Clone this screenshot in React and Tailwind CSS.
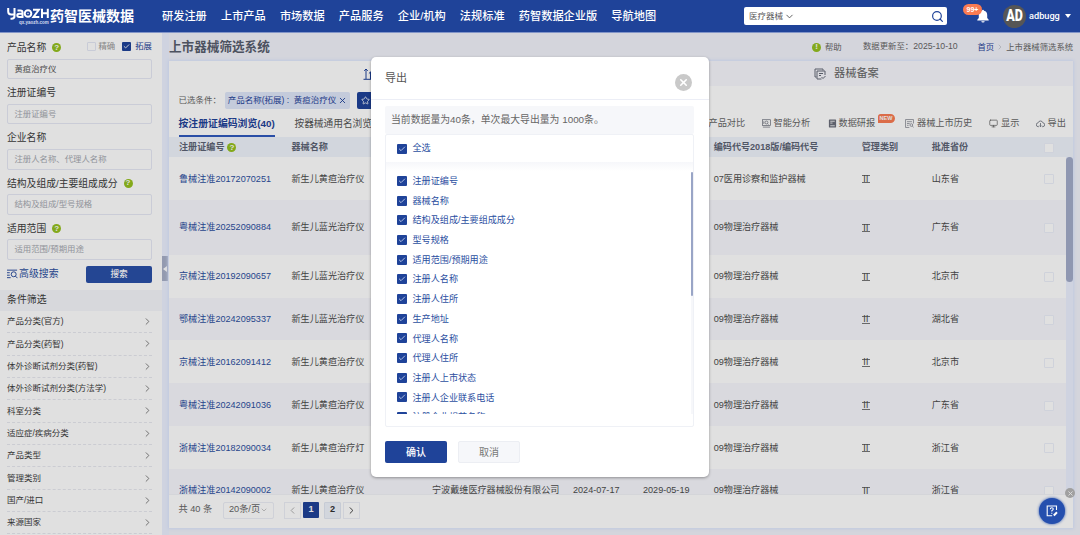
import React from "react";
import {
  Check,
  ChevronDown,
  ChevronLeft,
  ChevronRight,
  Monitor,
  Search,
  Star,
  X,
} from "lucide-react";

const navItems = ["研发注册", "上市产品", "市场数据", "产品服务", "企业/机构", "法规标准", "药智数据企业版", "导航地图"];

const fields = [
  { label: "产品名称", value: "黄疸治疗仪", help: true, modes: true },
  { label: "注册证编号", placeholder: "注册证编号" },
  { label: "企业名称", placeholder: "注册人名称、代理人名称" },
  { label: "结构及组成/主要组成成分", placeholder: "结构及组成/型号规格", help: true },
  { label: "适用范围", placeholder: "适用范围/预期用途", help: true },
];

const filters = [
  "产品分类(官方)",
  "产品分类(药智)",
  "体外诊断试剂分类(药智)",
  "体外诊断试剂分类(方法学)",
  "科室分类",
  "适应症/疾病分类",
  "产品类型",
  "管理类别",
  "国产/进口",
  "来源国家",
];

const rows = [
  { no: "鲁械注准20172070251", name: "新生儿黄疸治疗仪", code: "07医用诊察和监护器械", area: "山东省" },
  { no: "粤械注准20252090884", name: "新生儿蓝光治疗仪", code: "09物理治疗器械", area: "广东省", tall: true },
  { no: "京械注准20192090657", name: "新生儿蓝光治疗仪", code: "09物理治疗器械", area: "北京市" },
  { no: "鄂械注准20242095337", name: "新生儿蓝光治疗仪", code: "09物理治疗器械", area: "湖北省" },
  { no: "京械注准20162091412", name: "新生儿黄疸治疗仪", code: "09物理治疗器械", area: "北京市" },
  { no: "粤械注准20242091036", name: "新生儿黄疸治疗仪", code: "09物理治疗器械", area: "广东省" },
  { no: "浙械注准20182090034", name: "新生儿黄疸治疗灯", code: "09物理治疗器械", area: "浙江省" },
  {
    no: "浙械注准20142090002",
    name: "新生儿黄疸治疗仪",
    company: "宁波戴维医疗器械股份有限公司",
    from: "2024-07-17",
    to: "2029-05-19",
    code: "09物理治疗器械",
    area: "浙江省",
  },
];

const exportFields = [
  "注册证编号",
  "器械名称",
  "结构及组成/主要组成成分",
  "型号规格",
  "适用范围/预期用途",
  "注册人名称",
  "注册人住所",
  "生产地址",
  "代理人名称",
  "代理人住所",
  "注册人上市状态",
  "注册人企业联系电话",
  "注册企业规范名称",
];

const columns = "grid grid-cols-[112.5px_140.5px_141px_70px_70.7px_148px_70px_112.4px_1fr] items-center pl-2.5 pt-[2px]";

const HelpDot = ({ mark = "?" }) => (
  <span className="inline-flex size-[9px] shrink-0 items-center justify-center rounded-full bg-[#96c11f] text-[8px] leading-none font-bold text-white">
    {mark}
  </span>
);

const Tick = () => (
  <span className="flex size-2.5 shrink-0 items-center justify-center rounded-[1px] bg-[#1f4399]">
    <Check className="size-2 text-[#c9d4ee]" strokeWidth={2.5} />
  </span>
);

const EmptyBox = () => <span className="block size-2.5 rounded-[1px] border border-[#eceffa] bg-white" />;

// small toolbar glyphs
const ReportIcon = () => (
  <svg viewBox="0 0 10 10" className="size-[9px]" fill="none">
    <rect x="1" y="0.5" width="8" height="9" rx="0.5" fill="#6b6f7b" />
    <path d="M2.5 2.5h5M2.5 4.5h2.5M2.5 7.5h5" stroke="#fff" strokeWidth="0.9" />
  </svg>
);

const AnalyzeIcon = () => (
  <svg viewBox="0 0 10 10" className="size-[9px]" fill="none" stroke="#6b6f7b" strokeWidth="0.8">
    <rect x="0.5" y="0.8" width="9" height="6.4" />
    <circle cx="5" cy="3.9" r="1.6" />
    <path d="M6 5l1.2 1.2M2 2.5v3M1 9h8" />
  </svg>
);

const HistoryIcon = () => (
  <svg viewBox="0 0 10 10" className="size-[9px]" fill="none" stroke="#7a7e89" strokeWidth="0.8">
    <path d="M9.4 5V.6H.6v8.8h4.2M2.2 3h5.5M2.2 5h3M2.2 7h1.8" />
    <circle cx="7" cy="6.7" r="1.5" />
    <path d="M8.2 7.9l1.3 1.5" />
  </svg>
);

const ExportIcon = () => (
  <svg viewBox="0 0 10 10" className="size-[9px]" fill="none" stroke="#6b6f7b" strokeWidth="0.9">
    <path d="M3.300 8.500H2.600A2.100 2.100 0 0 1 2.300 4.300 2.800 2.800 0 0 1 7.700 4.300 2.100 2.100 0 0 1 7.400 8.500h-.7" />
    <path d="M5 4.500v4M3.700 7.300L5 8.600l1.300-1.300" />
  </svg>
);

const Header = () => (
  <header className="flex h-[33px] shrink-0 items-center border-b border-[#8295c8] bg-[#1f4399] text-white">
    <div className="flex w-[162px] shrink-0 items-center pl-[7px]">
      <div className="flex w-[42px] flex-col items-center">
        <svg viewBox="0 0 42 12" className="h-3 w-[42px]" fill="none" stroke="#fff" strokeWidth="2">
          <path d="M1.200 0v3.500q0 3 3 3h3.300M7.500 0v8q0 2.800-3 2.800h-1" />
          <path d="M10.500 2.500h3q2 0 2 2v4.400h-3.200q-2 0-2-1.600t2-1.500h3" />
          <circle cx="21" cy="5.500" r="3.300" />
          <circle cx="21" cy="5.500" r="0.700" fill="#fff" stroke="none" />
          <path d="M26 1.800h5.800l-5.300 7.100H32.300M35 .8v9.100M40.800.8v9.100M35 5.300h5.800" />
        </svg>
        <span className="mt-px ml-3 text-[4.5px] leading-[3px] font-bold text-[#d5ddf0]">qx.yaozh.com</span>
      </div>
      <span className="ml-px text-[14px] leading-none font-bold whitespace-nowrap">药智医械数据</span>
    </div>
    <nav className="flex w-[582px] shrink-0 gap-[14.2px] text-[11.2px] font-medium whitespace-nowrap">
      {navItems.map((item) => (
        <span key={item}>{item}</span>
      ))}
    </nav>
    <div className="flex h-[18px] w-[203px] shrink-0 items-center rounded-[2px] bg-white pr-[3px] pl-[5px] text-[8.5px] text-[#555]">
      医疗器械
      <ChevronDown className="ml-px size-[11px]" />
      <Search className="ml-auto size-[13px] text-[#1f4399]" strokeWidth={2.2} />
    </div>
    <div className="relative ml-[29px] size-[14px]">
      <svg viewBox="0 0 14 14" className="size-[14px]" fill="#fff">
        <path d="M7 .8a1 1 0 0 1 1 1C10.300 2.300 11.200 4 11.200 6v3l1.500 1.800v.8H1.300v-.8L2.800 9V6C2.800 4 3.700 2.300 6 1.800a1 1 0 0 1 1-1zM5.300 12.200h3.400a1.700 1.300 0 0 1-3.400 0z" />
      </svg>
      <span className="absolute -top-[5px] -left-[13px] flex h-[11px] w-[19px] items-center justify-center rounded-full bg-[#fa7b52] text-[7px] leading-none font-bold">
        99+
      </span>
    </div>
    <span className="ml-[13px] flex size-[23px] shrink-0 items-center justify-center rounded-full bg-[#565656] font-['Roboto',sans-serif] text-[12.5px] font-black">
      <span className="scale-y-125">AD</span>
    </span>
    <span className="ml-[3px] w-[31px] font-['Roboto',sans-serif] text-[9.2px] font-medium">adbugg</span>
    <span className="ml-[5px] border-x-[3.5px] border-t-4 border-x-transparent border-t-white" />
  </header>
);

const Sidebar = () => (
  <aside className="flex w-[162px] shrink-0 flex-col bg-white text-[#3c3c3c]">
    <div className="px-[7px] pt-px">
      {fields.map((f) => (
        <div key={f.label}>
          <div className="flex h-[24.6px] items-center pt-[4px] text-[9.8px]">
            {f.label}
            {f.help && (
              <span className="ml-1.5 flex pb-px">
                <HelpDot />
              </span>
            )}
            {f.modes && (
              <div className="ml-auto flex items-center pr-[3px] pb-[3px] text-[8.4px] text-[#999]">
                <span className="mr-[3px] size-[9px] rounded-[1px] border border-[#e4e8f5]" />
                精确
                <span className="mr-[4px] ml-[7px] flex size-[9px] items-center justify-center rounded-[1px] bg-[#1f4399]">
                  <Check className="size-[7px] text-white" strokeWidth={3} />
                </span>
                <span className="text-[#1f4399]">拓展</span>
              </div>
            )}
          </div>
          <div className="mr-[3px] flex h-[20.6px] items-center rounded-[2px] border border-[#e6e9f5] px-[6.5px] text-[8.4px]">
            <span className={f.value ? "text-[#555]" : "text-[#a5a8b0]"}>{f.value || f.placeholder}</span>
          </div>
        </div>
      ))}
      <div className="mt-[6px] mr-[3px] flex h-[17px] items-center justify-between">
        <span className="flex items-center text-[9.9px] whitespace-nowrap text-[#2c4f9f]">
          <svg viewBox="0 0 12 10" className="mr-px h-2.5 w-[11px]" fill="none" stroke="#1f4399" strokeWidth="1">
            <path d="M0 .8h11M0 3.600h3M0 6.300h3M0 9h4" />
            <circle cx="7.300" cy="5.300" r="2.700" />
            <path d="M9.200 7.300l2.300 2.300" />
          </svg>
          高级搜索
        </span>
        <span className="flex h-[17px] w-[66px] items-center justify-center rounded-[2px] bg-[#2a50a8] pt-px text-[8.6px] font-medium text-white">
          搜索
        </span>
      </div>
    </div>
    <div className="mt-[7px] flex h-[21px] shrink-0 items-center bg-[#f5f6fb] px-[7px] text-[9.9px]">条件筛选</div>
    <ul className="pr-2.5 pl-[7px] text-[8.5px]">
      {filters.map((name) => (
        <li key={name} className="flex h-[22.35px] items-center justify-between border-b border-dashed border-[#e8e9f0]">
          {name}
          <ChevronRight className="-mr-px size-[11px] text-[#777]" />
        </li>
      ))}
    </ul>
  </aside>
);

const TitleRow = () => (
  <div className="flex h-[28px] shrink-0 items-center text-[8.4px] whitespace-nowrap text-[#666]">
    <h1 className="w-[643px] shrink-0 text-[12.6px] font-bold text-[#585e6e]">上市器械筛选系统</h1>
    <HelpDot mark="!" />
    <span className="ml-1 w-[38px] shrink-0">帮助</span>
    <span className="w-[114.5px] shrink-0">
      数据更新至：<span className="text-[8.7px]">2025-10-10</span>
    </span>
    <span className="text-[#1f4399]">首页</span>
    <ChevronRight className="mx-[2px] size-2 shrink-0 text-[#b8bbc4]" />
    <span>上市器械筛选系统</span>
  </div>
);

const Toolbar = () => (
  <div className="flex h-[28px] items-center pl-[9.5px] text-[9.2px] whitespace-nowrap text-[#666]">
    <span className="mr-[20px] flex h-full w-[96px] items-center border-b-2 border-[#3059bd] pt-[4px] text-[9.85px] font-bold text-[#1f4399]">
      按注册证编码浏览(40)
    </span>
    <div className="flex items-center pt-[2px]">
      <span className="w-[414px] text-[9.7px] text-[#555]">按器械通用名浏览</span>
      <span className="w-[53px]">产品对比</span>
      <span className="flex w-[66px] items-center gap-[3px]">
        <AnalyzeIcon />
        智能分析
      </span>
      <span className="relative flex w-[77.5px] items-center gap-[2px]">
        <ReportIcon />
        数据研报
        <span className="absolute -top-[3px] left-[50px] flex h-[9px] w-[17px] items-center justify-center rounded-[3px_5px_5px_0] bg-[#fa7b52] text-[5.5px] leading-none font-bold text-white">
          NEW
        </span>
      </span>
      <span className="flex w-[84px] items-center gap-[3px]">
        <HistoryIcon />
        器械上市历史
      </span>
      <span className="flex w-[46.5px] items-center gap-[3px]">
        <Monitor className="size-[9px]" />
        显示
      </span>
      <span className="flex items-center gap-[3px]">
        <ExportIcon />
        导出
      </span>
    </div>
  </div>
);

const ResultTable = () => (
  <div className="text-[9.1px] whitespace-nowrap text-[#4c4c4c]">
    <div className={`${columns} h-5 bg-[#f0f4fc] font-bold text-[#5d6475]`}>
      <span className="flex items-center gap-[3px]">
        注册证编号
        <HelpDot />
      </span>
      <span>器械名称</span>
      <span />
      <span />
      <span />
      <span>编码代号2018版/编码代号</span>
      <span>管理类别</span>
      <span>批准省份</span>
      <EmptyBox />
    </div>
    <div className="flex h-[337px] overflow-hidden">
      <div className="w-[897px] shrink-0">
        {rows.map((row, i) => (
          <div
            key={row.no}
            className={`${columns} ${row.tall ? "h-[55px]" : "h-[42.8px]"} ${i % 2 ? "bg-[#f7f8fd]" : "bg-white"}`}
          >
            <span className="text-[#2c4f9f]">{row.no}</span>
            <span>{row.name}</span>
            <span>{row.company}</span>
            <span>{row.from}</span>
            <span>{row.to}</span>
            <span>{row.code}</span>
            <span className="flex h-[8px] w-[8px] items-center justify-center border-y border-[#777] leading-none">Ⅱ</span>
            <span>{row.area}</span>
            <EmptyBox />
          </div>
        ))}
      </div>
      <div className="flex-1 bg-[#ecf1ff]">
        <div className="h-[125px] rounded-full bg-[#a3acca]" />
      </div>
    </div>
  </div>
);

const Pagination = () => (
  <div className="flex h-[34px] items-center border-t border-[#f2f3f8] pb-[3px] pl-[9.5px] text-[9.2px] text-[#666]">
    <span className="w-[44.5px]">共 40 条</span>
    <span className="mr-[10px] flex h-[17px] w-[51px] items-center justify-center rounded-[2px] border border-[#eceef6]">
      20条/页
      <ChevronDown className="size-[8px] text-[#aaa]" />
    </span>
    <span className="mr-[2px] flex size-[17px] items-center justify-center border border-[#eceef6]">
      <ChevronLeft className="size-[11px] text-[#aaa]" />
    </span>
    <span className="mr-[5px] flex size-4 items-center justify-center rounded-[1px] bg-[#1f4399] font-bold text-white">1</span>
    <span className="mr-[2px] flex h-[17px] w-[17px] items-center justify-center rounded-[1px] border border-[#e2e8f3] bg-[#f0f4fc] font-bold text-[#333]">
      2
    </span>
    <span className="flex size-[17px] items-center justify-center border border-[#eceef6]">
      <ChevronRight className="size-[11px] text-[#333]" />
    </span>
  </div>
);

const Results = () => (
  <main className="flex w-[918px] shrink-0 bg-[#f2f3fb]">
    <div className="flex w-[7px] shrink-0 flex-col bg-[#ecf1ff] pt-[223px]">
      <div className="flex h-[25px] w-[6px] items-center justify-center bg-[#a8b0c9]">
        <span className="border-y-[3.5px] border-r-4 border-y-transparent border-r-white" />
      </div>
    </div>
    <div className="flex w-[904px] flex-col">
      <TitleRow />
      <section className="h-[467px] shrink-0 bg-white shadow-[0_0_3px_1px_#dbe5ff]">
        <div className="flex h-[25px] text-[11.2px] text-[#666]">
          <div className="flex w-1/2 items-center pl-[194px]">
            <svg viewBox="0 0 12 12" className="size-3" fill="none" stroke="#1f4399" strokeWidth="1">
              <path d="M.5 11.300h11M3 11V1M1.200 2.800L3 1l1.800 1.800M7.500 11V4M5.900 5.500L7.500 4l1.600 1.500M10.500 11V1.500" />
            </svg>
          </div>
          <div className="flex w-1/2 items-center bg-[#f7f8fd] pl-[193px]">
            <svg viewBox="0 0 12 12" className="mr-2 size-3" fill="none" stroke="#666b78" strokeWidth="1">
              <path d="M2.500 9H1V1h8v1.500" />
              <path d="M11 7V3H3v8h4.500M5 5.500h4M5 7.500h2M7.500 9l1.500 1.500L11.500 8" />
            </svg>
            器械备案
          </div>
        </div>
        <div className="mt-[5px] flex h-[18px] items-center pl-[9.5px] text-[8.5px] whitespace-nowrap text-[#666]">
          <span className="w-[46.5px]">已选条件：</span>
          <span className="mr-[7px] flex h-[17px] w-[125px] items-center justify-center rounded-[2px] bg-[#e0e7fa] text-[#1f4399]">
            产品名称(拓展)&nbsp;:&nbsp;&nbsp;黄疸治疗仪
            <X className="ml-[2px] size-[9px]" strokeWidth={2.4} />
          </span>
          <span className="flex h-[17px] w-[60px] items-center rounded-[2px] bg-[#1f4399] pl-1 text-white">
            <Star className="size-[9px]" />
          </span>
        </div>
        <Toolbar />
        <ResultTable />
        <Pagination />
      </section>
    </div>
  </main>
);

const ExportDialog = () => (
  <div className="absolute top-[57px] left-[371px] h-[420px] w-[338px] rounded-[5px] bg-white shadow-[0_1px_3px_rgba(0,0,0,0.35)]">
    <div className="flex h-[43px] items-center justify-between border-b border-[#eceef6] pr-[17px] pl-[14px] text-[11px] text-[#555]">
      <span className="pt-px">导出</span>
      <span className="mt-2 flex size-[17px] items-center justify-center rounded-full bg-[#c9c9c9]">
        <X className="size-[11px] text-white" strokeWidth={3.5} />
      </span>
    </div>
    <div className="px-[14px] pt-[6px]">
      <p className="flex h-7 w-[309px] items-center rounded-[2px] bg-[#f6f7fa] px-[6px] pt-px text-[9.85px] text-[#666]">
        当前数据量为40条，单次最大导出量为 1000条。
      </p>
      <div className="h-[293px] w-[309px] rounded-[2px] border border-[#eff1f6] text-[9.1px] text-[#2c4f9f]">
        <div className="flex h-[27px] items-center gap-[5.5px] pl-[11px]">
          <Tick />
          全选
        </div>
        <div className="h-[9px] bg-linear-to-b from-[#f6f7fa] to-white" />
        <div className="flex h-[243px] overflow-hidden">
          <ul className="w-[305px] shrink-0">
            {exportFields.map((name) => (
              <li key={name} className="flex h-[19.7px] items-center gap-[5.5px] pl-[11px]">
                <Tick />
                <span className="pt-[2px]">{name}</span>
              </li>
            ))}
          </ul>
          <div className="mt-px w-[3px] bg-[#f6f7fa]">
            <div className="h-[124px] rounded-full bg-[#99a5c6]" />
          </div>
        </div>
      </div>
      <div className="mt-[14px] flex gap-[11px] text-[10px]">
        <button className="h-[22px] w-[62px] rounded-[2px] bg-[#1f4399] font-medium text-white">确认</button>
        <button className="h-[22px] w-[62px] rounded-[2px] border border-[#eceef3] bg-[#f6f7fa] text-[#777]">取消</button>
      </div>
    </div>
  </div>
);

const App = () => (
  <div className="relative flex h-[535px] w-[1080px] flex-col overflow-hidden font-['Liberation_Sans','Noto_Sans_CJK_SC',sans-serif]">
    <Header />
    <div className="flex h-[502px] overflow-hidden">
      <Sidebar />
      <Results />
    </div>

    {/* Page mask, header stays bright */}
    <div className="absolute inset-x-0 top-[33px] bottom-0 bg-black/12" />
    <ExportDialog />

    {/* Floating feedback button */}
    <div className="absolute top-[498px] left-[1039px] flex size-[26px] items-center justify-center rounded-full bg-[#254fae] shadow-[0_0_3px_#254fae]">
      <svg viewBox="0 0 12 12" className="size-3" fill="none" stroke="#fff" strokeWidth="1.1">
        <path d="M10.500 5V1H1.200v9.800h5M4.300 4.200q0-1.500 1.500-1.500t1.500 1.400q0 .8-1.500 1.700v.8M5.800 7.800v1" />
        <path d="M7.800 10.500l3.200-3.300" strokeWidth="2" />
      </svg>
    </div>
    <span className="absolute top-[488px] left-[1065px] flex size-[10px] items-center justify-center rounded-full bg-[#a0a0a0]">
      <X className="size-[7px] text-[#e0e0e0]" strokeWidth={3} />
    </span>
  </div>
);

export default App;
